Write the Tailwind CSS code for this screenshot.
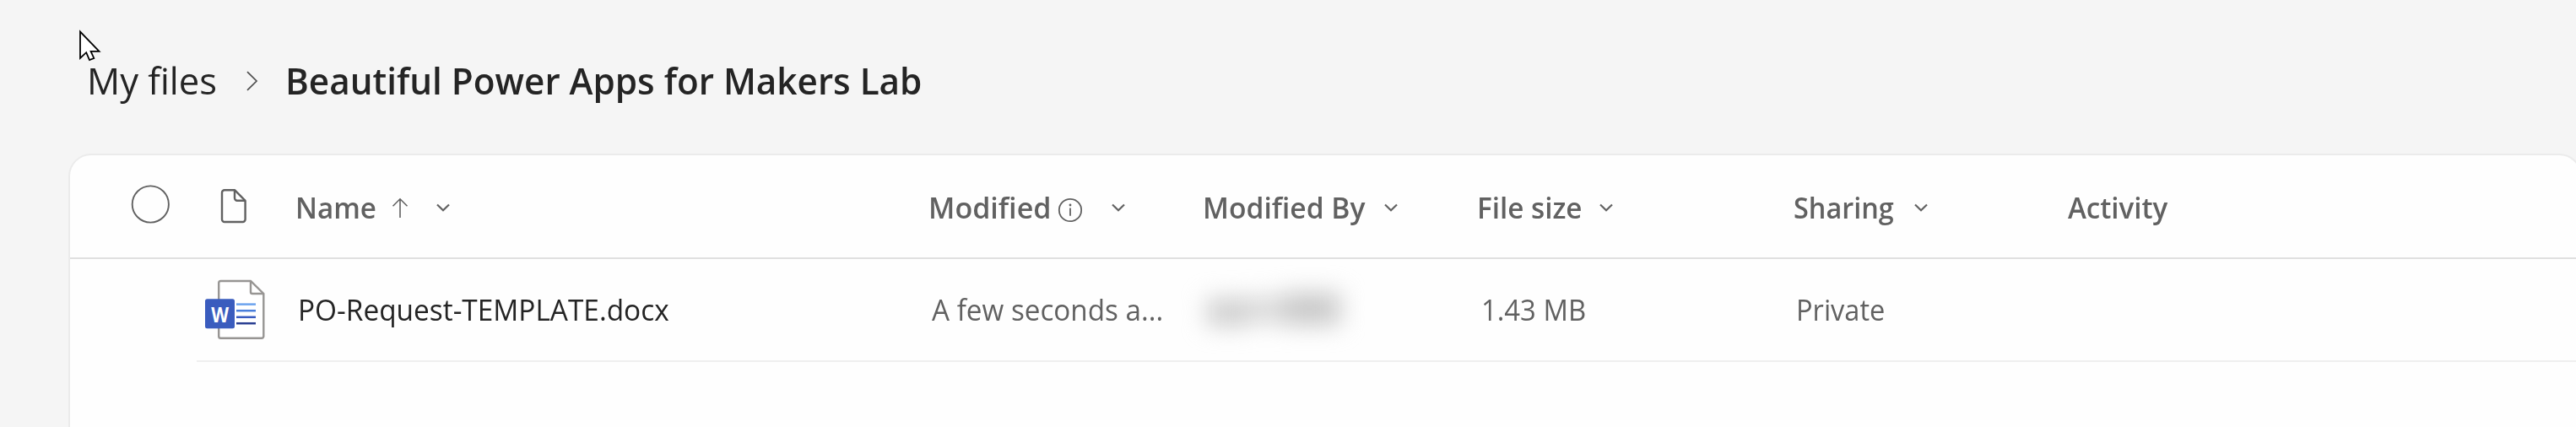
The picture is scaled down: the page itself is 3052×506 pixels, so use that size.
<!DOCTYPE html>
<html lang="en">
<head>
<meta charset="utf-8">
<title>My files</title>
<script src="https://cdn.jsdelivr.net/npm/@tailwindcss/browser@4"></script>
</head>
<body class="h-[506px] overflow-hidden bg-[#f5f5f5] font-['Open_Sans','Noto_Sans',sans-serif] text-[#242424]">
<div class="relative h-[506px] overflow-hidden">
  <nav class="flex h-[182px] items-start pl-[103px] pt-[65px] text-[44px] leading-[60px] whitespace-nowrap">
    <a class="w-[189px]"><span class="inline-block origin-left scale-x-[0.989]">My files</span></a>
    <svg class="mt-[19px] h-[24px] w-[14px]" viewBox="0 0 14 24" fill="none" stroke="#4f4f4f" stroke-width="1.7"><path d="M1 1.2 12 12 1 22.8"/></svg>
    <span class="ml-[32px] inline-block origin-left scale-x-[0.96] font-semibold">Beautiful Power Apps for Makers Lab</span>
  </nav>

  <main class="ml-[81px] h-[340px] w-[2978px] rounded-t-[27px] border-2 border-[#ebebeb] bg-[#fefefe] text-[35px] leading-[48px] whitespace-nowrap text-[#616161]">
    <!-- column headers -->
    <div class="grid h-[123px] grid-cols-[150px_117px_750px_325px_325px_375px_325px_1fr] items-center border-b-2 border-[#e0e0e0] pt-[2px] font-semibold">
      <div class="pl-[72px]"><svg class="-mt-[8px] size-[46px]" viewBox="0 0 46 46" fill="none" stroke="#616161" stroke-width="1.9"><circle cx="23.3" cy="23" r="21.6"/></svg></div>
      <div class="pl-[28px]"><svg class="-mt-[4px] h-[42px] w-[32px]" viewBox="0 0 32 42" fill="none" stroke="#616161" stroke-width="2.4" stroke-linejoin="round"><path d="M5 2.2H17L29.6 14.8V37a3 3 0 0 1-3 3H5a3 3 0 0 1-3-3V5.2a3 3 0 0 1 3-3Z"/><path d="M17 2.2V11.8a3 3 0 0 0 3 3H29.6"/></svg></div>
      <div class="flex items-center">
        <span class="w-[114px]"><span class="inline-block origin-left scale-x-[0.947]">Name</span></span>
        <svg class="h-[24px] w-[20px]" viewBox="0 0 20 24" fill="none" stroke="#616161" stroke-width="1.6"><path d="M10 24V2M1.5 10.2 10 1.8 18.5 10.2"/></svg>
        <svg class="ml-[32px] h-[12px] w-[18px]" viewBox="0 0 18 12" fill="none" stroke="#616161" stroke-width="2.2"><path d="M2 2.5 9 9.3 16 2.5"/></svg>
      </div>
      <div class="flex items-center">
        <span class="w-[153px]"><span class="inline-block origin-left scale-x-[0.973]">Modified</span></span>
        <svg class="mt-[6px] size-[30px]" viewBox="0 0 30 30" fill="none" stroke="#616161" stroke-width="1.8"><circle cx="15" cy="15" r="13.2"/><path d="M15 12.5V21.8"/><circle cx="15" cy="9" r="1.4" fill="#616161" stroke="none"/></svg>
        <svg class="ml-[33px] h-[12px] w-[18px]" viewBox="0 0 18 12" fill="none" stroke="#616161" stroke-width="2.2"><path d="M2 2.5 9 9.3 16 2.5"/></svg>
      </div>
      <div class="flex items-center">
        <span class="w-[214px]"><span class="inline-block origin-left scale-x-[0.96]">Modified By</span></span>
        <svg class="h-[12px] w-[18px]" viewBox="0 0 18 12" fill="none" stroke="#616161" stroke-width="2.2"><path d="M2 2.5 9 9.3 16 2.5"/></svg>
      </div>
      <div class="flex items-center">
        <span class="w-[144px]"><span class="inline-block origin-left scale-x-[0.949]">File size</span></span>
        <svg class="h-[12px] w-[18px]" viewBox="0 0 18 12" fill="none" stroke="#616161" stroke-width="2.2"><path d="M2 2.5 9 9.3 16 2.5"/></svg>
      </div>
      <div class="flex items-center">
        <span class="w-[142px]"><span class="inline-block origin-left scale-x-[0.926]">Sharing</span></span>
        <svg class="h-[12px] w-[18px]" viewBox="0 0 18 12" fill="none" stroke="#616161" stroke-width="2.2"><path d="M2 2.5 9 9.3 16 2.5"/></svg>
      </div>
      <div><span class="inline-block origin-left scale-x-[0.945]">Activity</span></div>
    </div>

    <!-- file row -->
    <div class="ml-[150px] grid h-[122px] grid-cols-[117px_750px_325px_325px_375px_325px_1fr] items-center border-b-2 border-[#efefef]">
      <div class="pl-[9px]">
        <svg class="h-[72px] w-[74px]" viewBox="0 0 74 72" fill="none">
          <path d="M19.5 2H55L70.3 17V67.5a2.3 2.3 0 0 1-2.3 2.3H19.5a2.3 2.3 0 0 1-2.3-2.3V4.3A2.3 2.3 0 0 1 19.5 2Z" fill="#fff" stroke="#979593" stroke-width="2.4"/>
          <path d="M55 2V15a2 2 0 0 0 2 2H70" stroke="#979593" stroke-width="2.4"/>
          <path d="M38 29.6H61" stroke="#6ca3ee" stroke-width="2.5"/>
          <path d="M38 37.2H61" stroke="#4a7fdb" stroke-width="2.5"/>
          <path d="M38 44.8H61" stroke="#385bc0" stroke-width="2.5"/>
          <path d="M38 52.2H61" stroke="#2a3f92" stroke-width="2.5"/>
          <rect x="1" y="23.3" width="35" height="35" rx="2.5" fill="#3a5cbe"/>
          <text x="8.3" y="51" font-size="24.5" font-weight="700" fill="#fff" textLength="20.8" lengthAdjust="spacingAndGlyphs">W</text>
        </svg>
      </div>
      <div class="pl-[3px] text-[#242424]"><span class="inline-block origin-left scale-x-[0.954]">PO-Request-TEMPLATE.docx</span></div>
      <div class="pl-[4px]"><span class="inline-block origin-left scale-x-[0.95]">A few seconds a...</span></div>
      <!-- obscured author name -->
      <div class="flex items-center pl-[5px] blur-[14px]">
        <div class="mt-[6px] h-[32px] w-[48px] bg-[#cccccc]"></div>
        <div class="h-[30px] w-[42px] bg-[#d8d8d8]"></div>
        <div class="-mt-[3px] h-[38px] w-[68px] bg-[#c8c8c8]"></div>
      </div>
      <div class="pl-[5px]"><span class="inline-block origin-left scale-x-[0.937]">1.43 MB</span></div>
      <div class="pl-[3px]"><span class="inline-block origin-left scale-x-[0.93]">Private</span></div>
      <div></div>
    </div>
  </main>

  <!-- mouse pointer -->
  <svg class="absolute left-[93px] top-[35px] h-[40px] w-[28px]" viewBox="0 0 28 40"><path d="M2 2.5V34L9.2 27.2 13 36.2 18.3 34 14.6 25.8H24.5Z" fill="#fff" stroke="#000" stroke-width="1.8"/></svg>
</div>
</body>
</html>
